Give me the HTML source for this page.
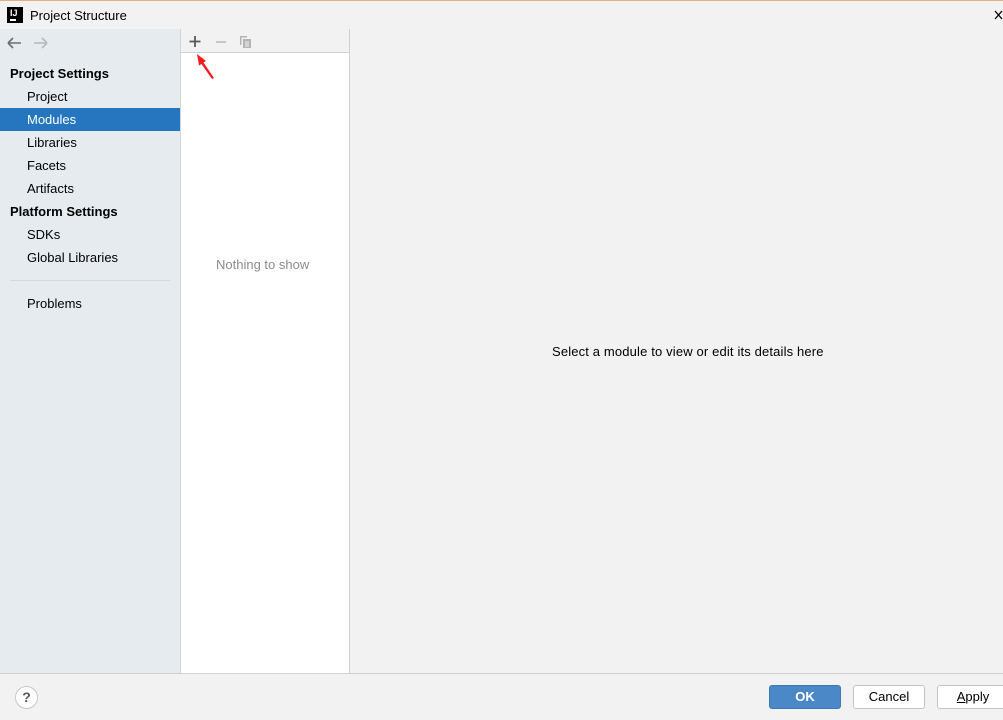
<!DOCTYPE html>
<html><head><meta charset="utf-8"><style>
*{margin:0;padding:0;box-sizing:border-box}
body{width:1003px;height:720px;overflow:hidden;background:#f2f2f2;font-family:"Liberation Sans","Noto Sans CJK SC",sans-serif;font-size:13px;color:#000;position:relative}
.abs{position:absolute}
.top{left:0;top:0;width:1003px;height:1px;background:#e0b080}
.side{left:0;top:29px;width:181px;height:644px;background:#e6ebf0;border-right:1px solid #d4d4d4}
.item{position:absolute;left:27px;height:23px;line-height:23px}
.hdr{position:absolute;left:10px;font-weight:bold}
.sel{position:absolute;left:0;top:79px;width:180px;height:23px;background:#2675bf}
.mid{left:181px;top:29px;width:169px;height:644px;background:#fff;border-right:1px solid #d0d0d0}
.tb{left:0;top:0;width:168px;height:24px;background:#f2f2f2;border-bottom:1px solid #d0d0d0}
.bottom{left:0;top:673px;width:1003px;height:1px;background:#d0d0d0}
.btn{top:685px;height:24px;border:1px solid #c4c4c4;border-radius:3px;background:#fff;text-align:center;line-height:22px}
</style></head><body>
<div class="abs top"></div>
<div class="abs" style="left:7px;top:7px;width:16px;height:16px;background:#000"><div style="position:absolute;left:3px;top:1px;color:#fff;font-size:9px;font-weight:bold;line-height:10px">IJ</div><div style="position:absolute;left:3px;top:12px;width:6px;height:1.5px;background:#fff"></div></div>
<div class="abs" style="left:30px;top:8px;font-size:13px">Project Structure</div>
<svg class="abs" style="left:994px;top:10px" width="9" height="10"><path d="M1 1L8 9M8 1L1 9" stroke="#000" stroke-width="1.3"/></svg>

<div class="abs side">
<svg class="abs" style="left:6px;top:7px" width="44" height="14"><path d="M2 7H15M2 7L7 2M2 7L7 12" stroke="#6e6e6e" stroke-width="1.6" fill="none"/><path d="M28 7H41M41 7L36 2M41 7L36 12" stroke="#b8b8b8" stroke-width="1.6" fill="none"/></svg>
<div class="hdr" style="top:37px">Project Settings</div>
<div class="item" style="top:56px">Project</div>
<div class="sel"></div>
<div class="item" style="top:79px;color:#fff">Modules</div>
<div class="item" style="top:102px">Libraries</div>
<div class="item" style="top:125px">Facets</div>
<div class="item" style="top:148px">Artifacts</div>
<div class="hdr" style="top:175px">Platform Settings</div>
<div class="item" style="top:194px">SDKs</div>
<div class="item" style="top:217px">Global Libraries</div>
<div class="abs" style="left:10px;top:251px;width:160px;height:1px;background:#d6d9dc"></div>
<div class="item" style="top:263px">Problems</div>
</div>

<div class="abs mid">
<div class="abs tb">
<svg class="abs" style="left:6px;top:5px" width="70" height="16"><path d="M8 2V13M2.5 7.5H13.5" stroke="#5a5a5a" stroke-width="1.8"/><path d="M29 8H39" stroke="#bbb" stroke-width="1.6"/><path d="M53 2H60V3.5H54.5V11H53Z" fill="#b4b4b4"/><rect x="56" y="5" width="8" height="9" fill="#b4b4b4"/><path d="M58 8H62M58 10H62M58 12H62" stroke="#f2f2f2"/></svg>
</div>
<div class="abs" style="left:35px;top:228px;color:#8c8c8c">Nothing to show</div>
</div>
<svg class="abs" style="left:193px;top:52px" width="25" height="28"><path d="M4 2L13 9L10.5 10.5L21 26L19 27L8.5 12L6 13.5Z" fill="#f41c1c"/></svg>

<div class="abs" style="left:552px;top:344px;letter-spacing:0.15px">Select a module to view or edit its details here</div>

<div class="abs bottom"></div>
<div class="abs" style="left:15px;top:686px;width:23px;height:23px;border:1px solid #c8c8c8;border-radius:50%;background:#fff;text-align:center;line-height:21px;font-weight:bold;color:#555;font-size:14px">?</div>
<div class="abs btn" style="left:769px;width:72px;background:#4a88c7;border-color:#3d79b5;color:#fff;font-weight:bold">OK</div>
<div class="abs btn" style="left:853px;width:72px">Cancel</div>
<div class="abs btn" style="left:937px;width:72px"><u>A</u>pply</div>
</body></html>
